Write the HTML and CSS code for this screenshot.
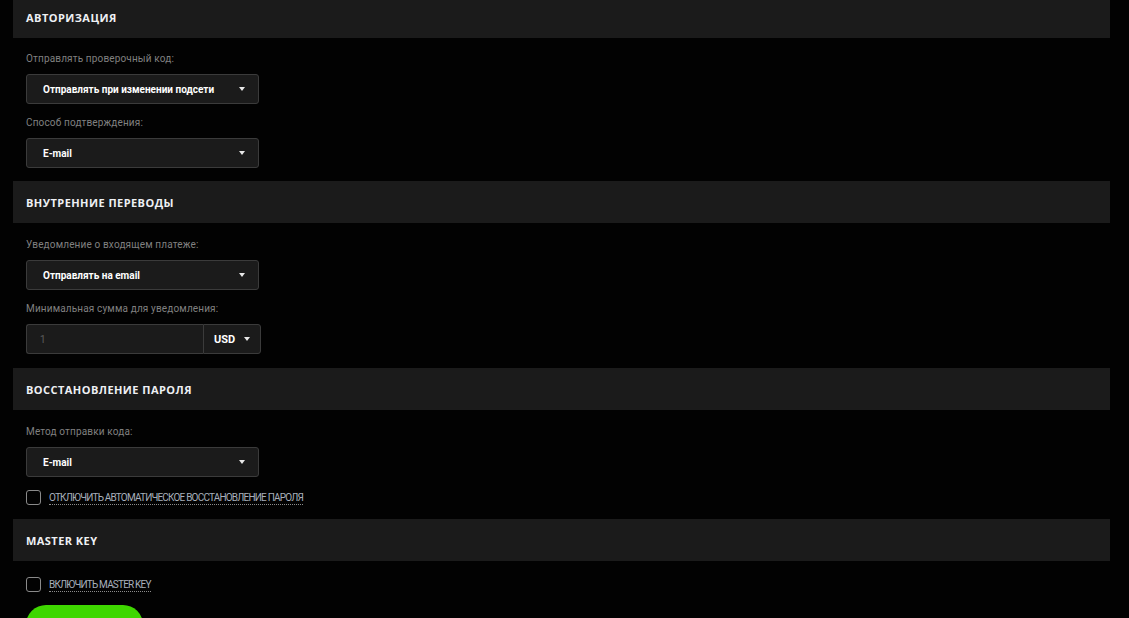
FILE: index.html
```html
<!DOCTYPE html>
<html lang="ru">
<head>
  <meta charset="UTF-8" />
  <meta name="viewport" content="width=device-width, initial-scale=1.0" />
  <title>Настройки безопасности</title>
  <link rel="stylesheet" href="styles.css">
</head>
<body>
  <div class="settings">
    <section class="block">
      <h2 class="block-head">Авторизация</h2>
      <div class="block-body">
        <label class="field-label">Отправлять проверочный код:</label>
        <div class="select">Отправлять при изменении подсети <span class="caret"></span></div>
        <label class="field-label">Способ подтверждения:</label>
        <div class="select">E-mail <span class="caret"></span></div>
      </div>
    </section>

    <section class="block">
      <h2 class="block-head">Внутренние переводы</h2>
      <div class="block-body">
        <label class="field-label">Уведомление о входящем платеже:</label>
        <div class="select">Отправлять на email <span class="caret"></span></div>
        <label class="field-label">Минимальная сумма для уведомления:</label>
        <div class="input-group">
          <input class="amount" type="text" placeholder="1">
          <div class="currency">USD <span class="caret"></span></div>
        </div>
      </div>
    </section>

    <section class="block">
      <h2 class="block-head">Восстановление пароля</h2>
      <div class="block-body">
        <label class="field-label">Метод отправки кода:</label>
        <div class="select">E-mail <span class="caret"></span></div>
        <label class="check">
          <span class="box"></span>
          <span class="check-text">Отключить автоматическое восстановление пароля</span>
        </label>
      </div>
    </section>

    <section class="block">
      <h2 class="block-head">Master key</h2>
      <div class="block-body">
        <label class="check">
          <span class="box"></span>
          <span class="check-text">Включить master key</span>
        </label>
        <button class="btn-save">Сохранить</button>
      </div>
    </section>
  </div>
</body>
</html>
```

FILE: styles.css
```css
body {
  margin: 0;
  background: #020202;
  color: #fff;
  font-family: 'Roboto', 'Liberation Sans', sans-serif;
  overflow: hidden;
}
.settings {
  margin-top: -4px;
  padding: 0 19px 0 13px;
}
.block-head {
  margin: 0;
  height: 42px;
  padding: 0 13px;
  display: flex;
  align-items: center;
  background: #1b1b1b;
  font-family: 'Open Sans', sans-serif;
  font-size: 11px;
  font-weight: 700;
  letter-spacing: 0.45px;
  text-transform: uppercase;
  color: #eef0f4;
}
.block-body {
  padding: 15px 13px 14px;
  display: flex;
  flex-direction: column;
  align-items: flex-start;
}
.block:first-child .block-body {
  padding-top: 14px;
  padding-bottom: 13px;
}
.block:last-child .block-body {
  padding-top: 16px;
}
.field-label {
  font-size: 10px;
  letter-spacing: 0.15px;
  line-height: 14px;
  color: #808080;
  margin-bottom: 8px;
}
.select {
  width: 233px;
  height: 30px;
  box-sizing: border-box;
  padding: 0 13px 0 16px;
  display: flex;
  align-items: center;
  justify-content: space-between;
  background: #1b1b1b;
  border: 1px solid #3b3b3b;
  border-radius: 3px;
  font-size: 10px;
  font-weight: 700;
  margin-bottom: 12px;
}
.block-body > .select:last-child,
.block-body > .input-group:last-child {
  margin-bottom: 0;
}
.caret {
  width: 0;
  height: 0;
  border-left: 3.5px solid transparent;
  border-right: 3.5px solid transparent;
  border-top: 4px solid #e8e8e8;
}
.input-group {
  display: flex;
  height: 30px;
}
.amount {
  width: 177px;
  box-sizing: border-box;
  background: #1b1b1b;
  border: 1px solid #3b3b3b;
  border-right: none;
  border-radius: 3px 0 0 3px;
  padding: 0 13px;
  font-family: inherit;
  font-size: 10px;
  color: #fff;
  outline: none;
}
.amount::placeholder {
  color: #5c5c5c;
}
.currency {
  width: 58px;
  box-sizing: border-box;
  display: flex;
  align-items: center;
  justify-content: center;
  gap: 9px;
  background: #1b1b1b;
  border: 1px solid #3b3b3b;
  border-radius: 0 3px 3px 0;
  font-size: 11px;
  font-weight: 700;
}
.check {
  display: flex;
  align-items: center;
  gap: 8px;
  margin-top: 1px;
  cursor: pointer;
}
.block:last-child .check {
  margin-top: 0;
}
.box {
  width: 15px;
  height: 15px;
  box-sizing: border-box;
  border: 1px solid #8a8a8a;
  border-radius: 3px;
}
.check-text {
  font-size: 10px;
  letter-spacing: -0.8px;
  text-transform: uppercase;
  color: #a7afbb;
  line-height: 13px;
  border-bottom: 1px dotted #8c8c8c;
}
.btn-save {
  margin-top: 13px;
  width: 117px;
  height: 52px;
  border: none;
  border-radius: 20px;
  background: #3fd700;
  color: #fff;
  font-family: inherit;
  font-weight: 700;
  font-size: 12px;
  text-transform: uppercase;
}
```
